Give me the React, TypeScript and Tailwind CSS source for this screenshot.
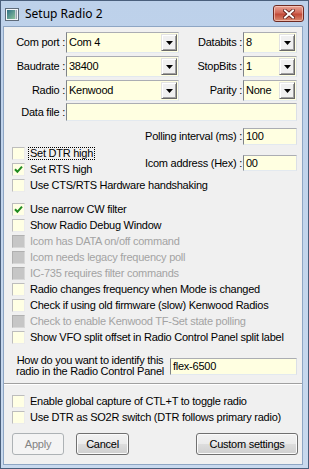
import React from 'react';

function DropBtn() {
  return (
    <div className="w-[16px] h-[17px] mr-[1px] shrink-0 bg-[#f0f0f0] border border-t-[#e3e3e3] border-l-[#e3e3e3] border-r-[#696969] border-b-[#696969] shadow-[inset_1px_1px_0_#ffffff,inset_-1px_-1px_0_#a0a0a0] flex items-center justify-center">
      <svg width="7" height="4" viewBox="0 0 7 4"><path d="M0 0H7L3.5 4Z" fill="#000" /></svg>
    </div>
  );
}

function Combo({ cls, value }: { cls: string; value: string }) {
  return (
    <div className={cls + " h-[21px] shrink-0 bg-[#ffffe1] border border-t-[#abadb3] border-l-[#7f8388] border-r-[#dbdfe6] border-b-[#e3e9ef] flex items-center"}>
      <span className="flex-1 pl-[2px] whitespace-nowrap">{value}</span>
      <DropBtn />
    </div>
  );
}

function Input({ cls, value }: { cls: string; value: string }) {
  return (
    <div className={cls + " shrink-0 bg-[#ffffe1] border border-t-[#abadb3] border-l-[#7f8388] border-r-[#dbdfe6] border-b-[#e3e9ef] flex items-center pl-[2px] whitespace-nowrap"}>
      {value}
    </div>
  );
}

function Box({ checked, disabled }: { checked?: boolean; disabled?: boolean }) {
  return (
    <span
      className={
        disabled
          ? "w-[13px] h-[13px] shrink-0 bg-[#c6c6c6] border border-t-[#b0b0b0] border-l-[#b0b0b0] border-r-[#d8d8d8] border-b-[#d8d8d8] flex items-center justify-center"
          : "w-[13px] h-[13px] shrink-0 bg-[#ffffe4] border border-t-[#bdbdbd] border-l-[#bdbdbd] border-r-[#ececec] border-b-[#ececec] flex items-center justify-center"
      }
    >
      {checked && (
        <svg width="9" height="9" viewBox="0 0 9 9">
          <path d="M1 4.2L3.4 6.8L8 1.6" fill="none" stroke="#1e8a1e" strokeWidth="2" />
        </svg>
      )}
    </span>
  );
}

function CheckRow({ label, checked, disabled, focus }: { label: string; checked?: boolean; disabled?: boolean; focus?: boolean }) {
  return (
    <div className="h-[16px] flex items-center pl-[8px] shrink-0">
      <Box checked={checked} disabled={disabled} />
      <span
        className={
          (focus ? "border border-dotted border-black " : "border border-transparent ") +
          (disabled ? "text-[#a3a3a3] " : "text-black ") +
          "ml-[3px] px-[1px] whitespace-nowrap leading-[11px]"
        }
      >
        {label}
      </span>
    </div>
  );
}

export default function App() {
  return (
    <div className="w-[309px] h-[469px] bg-[linear-gradient(#bdd1ea,#c8d9ee)] border border-[#4a5f7c] flex flex-col font-['Liberation_Sans',Arial,sans-serif] text-[11px] tracking-[-0.25px] text-black leading-none select-none overflow-hidden">
      {/* Title bar */}
      <div className="h-[25px] shrink-0 flex items-center relative">
        <svg className="ml-[4px] mt-[1px]" width="14" height="13" viewBox="0 0 14 13">
          <defs>
            <linearGradient id="ig" x1="0" y1="0" x2="1" y2="1">
              <stop offset="0" stopColor="#2e6f86" />
              <stop offset="1" stopColor="#8cc29a" />
            </linearGradient>
          </defs>
          <rect x="0.5" y="0.5" width="13" height="12" fill="#f4f6f8" stroke="#5e6b7a" />
          <rect x="2" y="2" width="8" height="9" fill="url(#ig)" />
          <rect x="10.5" y="2" width="1.5" height="9" fill="#9aa6b2" />
        </svg>
        <span className="ml-[6px] font-['Noto_Sans',sans-serif] text-[12px] tracking-normal text-black">Setup Radio 2</span>
        <div className="absolute right-[4px] top-[4px] w-[31px] h-[17px] rounded-[3px] border border-[#6e2a22] bg-[linear-gradient(#e8a496,#d26a5a_45%,#c24a38_55%,#d98a70)] shadow-[inset_0_0_0_1px_rgba(255,220,210,0.6)] flex items-center justify-center">
          <svg width="12" height="10" viewBox="0 0 12 10">
            <path d="M2 1.5L10 8.5M10 1.5L2 8.5" stroke="#5b1a14" strokeWidth="3.6" strokeLinecap="square" />
            <path d="M2 1.5L10 8.5M10 1.5L2 8.5" stroke="#ffffff" strokeWidth="2" strokeLinecap="square" />
          </svg>
        </div>
      </div>

      {/* Client area */}
      <div className="ml-[2px] mr-[5px] mb-[3px] flex-1 bg-[#f0f0f0] border border-[#8ea6c4] flex flex-col">
        <div className="mt-[5px] h-[21px] flex items-center">
          <span className="w-[62px] text-right pr-[1px] whitespace-nowrap">Com port :</span>
          <Combo cls="w-[113px]" value="Com 4" />
          <span className="w-[64px] text-right pr-[1px] whitespace-nowrap">Databits :</span>
          <Combo cls="w-[54px]" value="8" />
        </div>
        <div className="mt-[3px] h-[21px] flex items-center">
          <span className="w-[62px] text-right pr-[1px] whitespace-nowrap">Baudrate :</span>
          <Combo cls="w-[113px]" value="38400" />
          <span className="w-[64px] text-right pr-[1px] whitespace-nowrap">StopBits :</span>
          <Combo cls="w-[54px]" value="1" />
        </div>
        <div className="mt-[3px] h-[21px] flex items-center">
          <span className="w-[62px] text-right pr-[1px] whitespace-nowrap">Radio :</span>
          <Combo cls="w-[113px]" value="Kenwood" />
          <span className="w-[64px] text-right pr-[1px] whitespace-nowrap">Parity :</span>
          <Combo cls="w-[54px]" value="None" />
        </div>
        <div className="mt-[2px] h-[18px] flex items-center">
          <span className="w-[62px] text-right pr-[1px] whitespace-nowrap">Data file :</span>
          <Input cls="w-[231px] h-[18px]" value="" />
        </div>
        <div className="mt-[7px] h-[17px] flex items-center justify-end pr-[5px]">
          <span className="pr-[1px] whitespace-nowrap">Polling interval (ms) :</span>
          <Input cls="w-[54px] h-[17px]" value="100" />
        </div>

        <div className="flex shrink-0">
          <div className="flex flex-col flex-1">
            <CheckRow label="Set DTR high" focus />
            <CheckRow label="Set RTS high" checked />
          </div>
          <div className="flex items-center mt-[10px] h-[16px] pr-[5px] self-start">
            <span className="pr-[1px] whitespace-nowrap">Icom address (Hex) :</span>
            <Input cls="w-[54px] h-[16px]" value="00" />
          </div>
        </div>
        <CheckRow label="Use CTS/RTS Hardware handshaking" />

        <div className="mt-[8px] flex flex-col">
          <CheckRow label="Use narrow CW filter" checked />
          <CheckRow label="Show Radio Debug Window" />
          <CheckRow label="Icom has DATA on/off command" disabled />
          <CheckRow label="Icom needs legacy frequency poll" disabled />
          <CheckRow label="IC-735 requires filter commands" disabled />
          <CheckRow label="Radio changes frequency when Mode is changed" />
          <CheckRow label="Check if using old firmware (slow) Kenwood Radios" />
          <CheckRow label="Check to enable Kenwood TF-Set state polling" disabled />
          <CheckRow label="Show VFO split offset in Radio Control Panel split label" />
        </div>

        <div className="mt-[10px] h-[22px] flex items-center">
          <div className="w-[166px] pl-[6px] text-center leading-[11px] whitespace-nowrap">
            How do you want to identify this
            <br />
            radio in the Radio Control Panel
          </div>
          <Input cls="w-[127px] h-[17px]" value="flex-6500" />
        </div>

        <div className="mt-[6px] h-[2px] border-t border-t-[#a0a0a0] border-b border-b-white shrink-0" />

        <div className="mt-[8px] flex flex-col">
          <CheckRow label="Enable global capture of CTL+T to toggle radio" />
          <CheckRow label="Use DTR as SO2R switch (DTR follows primary radio)" />
        </div>

        <div className="mt-[8px] h-[22px] flex items-stretch pl-[8px] pr-[4px]">
          <div className="w-[52px] rounded-[3px] border border-[#adb2b5] bg-[#f4f4f4] text-[#838383] flex items-center justify-center">Apply</div>
          <div className="ml-[12px] w-[53px] rounded-[3px] border border-[#707070] bg-[linear-gradient(#f2f2f2,#ebebeb_50%,#dddddd_51%,#cfcfcf)] shadow-[inset_0_0_0_1px_#fbfbfb] flex items-center justify-center">Cancel</div>
          <div className="ml-auto w-[102px] rounded-[3px] border border-[#707070] bg-[linear-gradient(#f2f2f2,#ebebeb_50%,#dddddd_51%,#cfcfcf)] shadow-[inset_0_0_0_1px_#fbfbfb] flex items-center justify-center">Custom settings</div>
        </div>
      </div>
    </div>
  );
}
